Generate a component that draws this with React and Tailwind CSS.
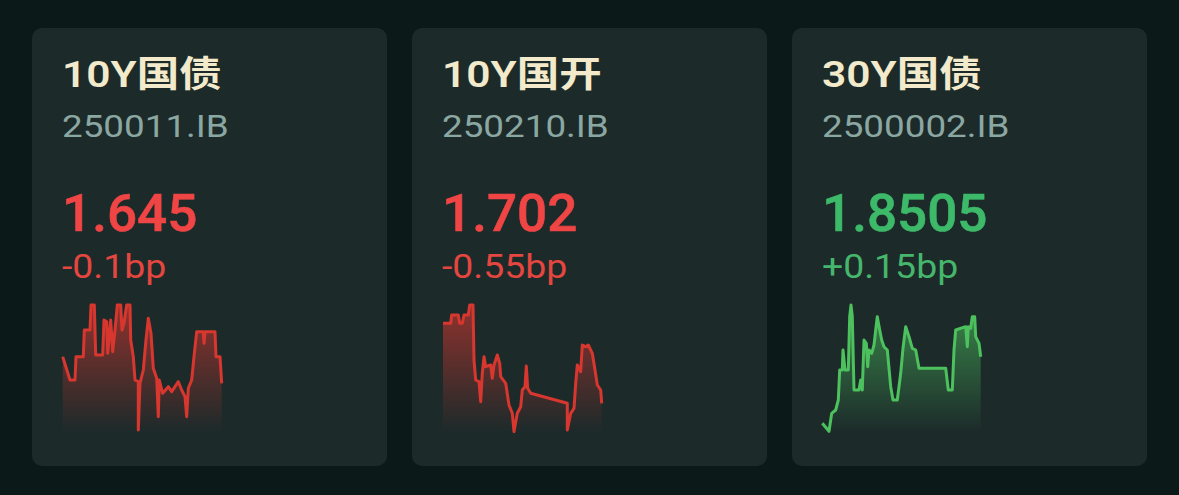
import { useId } from 'react'

/* ── Sparkline data (160 x 130 box) ── */
const RED_LINE = [
  [0.7, 53.7], [8, 77], [13, 77], [14, 53.7], [21.3, 53.7], [22.3, 27], [28, 27], [29, 2], [32.3, 2],
  [33.7, 52], [40.7, 52], [42, 17], [44.7, 18.7], [45.7, 50.3], [48.7, 17], [50.7, 48.7], [53, 27],
  [55.3, 2], [58.7, 2], [60, 27], [62, 20.3], [64.7, 2], [68, 2], [68.7, 37], [71.3, 53.7], [73, 77],
  [76.3, 78.7], [76.3, 127], [78, 80.3], [81.3, 67], [84, 37], [86.3, 15.3], [89, 30.3], [91.3, 65.3],
  [94.7, 75.3], [96.3, 113.7], [97.3, 77], [100.7, 90.3], [106.3, 83.7], [109.7, 88.7], [116.3, 78.7],
  [119.7, 87], [123, 93.7], [124.7, 113.7], [126.3, 85.3], [129.7, 77], [132, 53.7], [134.7, 28.7],
  [141.3, 28.7], [142, 40.3], [143, 28.7], [153, 28.7], [154, 53.7], [158, 53.7], [159.7, 80.3],
]

const RED_LINE_2 = [
  [1, 20.3], [8.7, 20.3], [9.7, 12], [16.3, 12], [17.7, 20.3], [20.3, 20.3], [22, 12], [26.3, 12],
  [27.7, 2], [31, 2], [32, 57], [33.7, 77], [37, 78.7], [38.7, 98.7], [40.3, 70.3], [42, 53.7],
  [43.7, 63.7], [48.7, 62], [50.3, 75.3], [52, 62], [55.3, 52], [57.7, 60.3], [58.7, 73.7], [63.7, 80.3],
  [67, 102], [70.3, 110.3], [72, 128.7], [75.3, 110.3], [78.7, 103.7], [80.3, 87], [83, 83.7],
  [84.3, 63], [85.7, 85.3], [88.7, 90.3], [125.3, 100.3], [125.3, 127], [128.7, 110.3], [132, 105.3],
  [133.7, 80.3], [135.3, 62], [138.7, 68.7], [140.3, 42], [143.7, 43.7], [146.3, 42], [150.3, 50.3],
  [153, 67], [155.3, 82], [158.7, 87], [159.7, 100.3],
]

const GREEN_LINE = [
  [0.3, 120.3], [7, 128.3], [9.7, 110.3], [13.7, 107], [16.3, 97], [17.7, 67], [20.3, 67], [21, 47],
  [23, 67], [26.3, 67], [27.7, 13.7], [29, 2], [30.3, 13.7], [32, 87], [37, 87], [38.7, 77], [40.3, 87],
  [42, 37], [44.3, 40.3], [45.7, 63.7], [47, 47], [49.7, 50.3], [52, 42], [53.7, 27], [55.3, 13.7],
  [57.7, 27], [59.7, 37], [62, 43.7], [65.3, 47], [68.7, 83.7], [71, 97], [75.3, 97], [78.7, 70.3],
  [81, 45.3], [83.7, 23.7], [87, 33.7], [90.3, 45.3], [93.7, 47], [97, 65.3], [123.7, 65.3],
  [126.3, 87], [130.3, 87], [132, 47], [133.7, 27], [143.7, 23.7], [145.3, 43.7], [146.3, 23.7],
  [148.7, 25.3], [150.3, 13.7], [152.7, 13.7], [153.7, 33.7], [157, 40.3], [158.7, 53.7],
]

const BONDS = [
  { name: '10Y国债', code: '250011.IB', price: '1.645', change: '-0.1bp', up: false, line: RED_LINE },
  { name: '10Y国开', code: '250210.IB', price: '1.702', change: '-0.55bp', up: false, line: RED_LINE_2 },
  { name: '30Y国债', code: '2500002.IB', price: '1.8505', change: '+0.15bp', up: true, line: GREEN_LINE },
]

/* ── Sparkline ── */
function Sparkline({ points, up }) {
  const id = useId().replace(/:/g, '')
  const stroke = up ? '#4cc15d' : '#d7372f'
  const line = points.map(([x, y]) => `${x},${y}`).join(' ')
  const first = points[0]
  const last = points[points.length - 1]
  const area = `${first[0]},130 ${line} ${last[0]},130`
  return (
    <svg width="160" height="130" viewBox="0 0 160 130" className="block overflow-visible">
      <defs>
        <linearGradient id={id} x1="0" y1="0" x2="0" y2="1">
          <stop offset="0%" stopColor={stroke} stopOpacity="0.62" />
          <stop offset="100%" stopColor={stroke} stopOpacity="0" />
        </linearGradient>
      </defs>
      <polygon points={area} fill={`url(#${id})`} />
      <polyline points={line} fill="none" stroke={stroke} strokeWidth="3" strokeLinejoin="round" />
    </svg>
  )
}

/* ── Bond card ── */
function BondCard({ bond }) {
  const priceColor = bond.up ? 'text-[#3dba69]' : 'text-[#f04545]'
  const changeColor = bond.up ? 'text-[#45b66b]' : 'text-[#e5463f]'
  return (
    <div className="h-[438px] rounded-[10px] bg-[#1c2a2a] pl-[30px] pt-[26px]">
      <p className="origin-left scale-x-[1.18] text-[36px] leading-[43px] font-semibold text-[#f3eacb]">
        {bond.name}
      </p>
      <p className="mt-[10px] origin-left scale-x-[1.15] text-[32px] leading-[38px] text-[#8ba7a2]">
        {bond.code}
      </p>
      <p className={`mt-[39px] origin-left scale-x-[1.02] text-[52px] leading-[60px] font-medium [-webkit-text-stroke:0.6px_currentColor] ${priceColor}`}>
        {bond.price}
      </p>
      <p className={`mt-[2px] origin-left scale-x-[1.1] text-[34px] leading-[40px] ${changeColor}`}>
        {bond.change}
      </p>
      <div className="mt-[17px]">
        <Sparkline points={bond.line} up={bond.up} />
      </div>
    </div>
  )
}

export default function App() {
  return (
    <div className="h-[495px] w-full bg-[#0b1919] px-[32px] pt-[28px] font-['Roboto','Noto_Sans_CJK_SC',sans-serif]">
      <div className="grid grid-cols-3 gap-[25px]">
        {BONDS.map((b) => (
          <BondCard key={b.code} bond={b} />
        ))}
      </div>
    </div>
  )
}
